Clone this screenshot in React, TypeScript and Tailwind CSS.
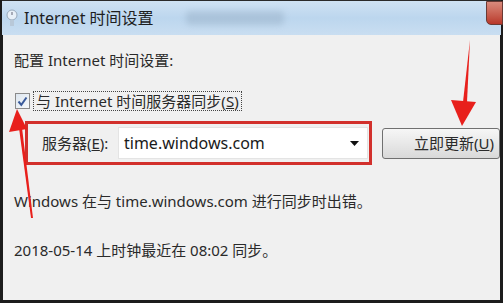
export default function App() {
  const font = { fontFamily: '"Noto Sans", "Noto Sans CJK SC", sans-serif' };

  return (
    <div className="relative w-[503px] h-[303px] overflow-hidden bg-[#1c1c1c]" style={font}>
      {/* title bar */}
      <div className="relative h-[35px] border-t border-[#2a2a2a] ml-[2px] mr-[2px] bg-gradient-to-b from-[#cfe2f3] via-[#bcd6ee] to-[#c9def1] flex items-center">
        <div className="w-[16px] h-[18px] ml-[2px] flex items-center justify-center">
          <svg width="14" height="18" viewBox="0 0 14 18">
            <circle cx="7" cy="6" r="5" fill="#e8f0f8" stroke="#9ab" strokeWidth="1" />
            <line x1="7" y1="6" x2="7" y2="3" stroke="#667" strokeWidth="1" />
            <rect x="5" y="11" width="4" height="6" fill="#b8c8d8" />
          </svg>
        </div>
        <span className="ml-[4px] text-[16px] text-[#1e1e1e] leading-none">Internet 时间设置</span>
        <div className="ml-[32px] h-[14px] w-[98px] rounded bg-[#8fa6bd] opacity-40 blur-[3px]" />
        <div className="absolute right-[-2px] top-0 w-[17px] h-[24px] rounded-bl-[5px] bg-gradient-to-b from-[#d98a7c] to-[#b8372a] border border-[#6a3a34]" />
      </div>

      {/* body */}
      <div className="h-[265px] ml-[3px] mr-[3px] bg-[#f0f0f0] text-[#2a2a2a] text-[15px] leading-none">
        <div className="pt-[18px] pl-[11px]">配置 Internet 时间设置:</div>

        <div className="mt-[23px] flex items-center pl-[12px]">
          <div className="w-[15px] h-[16px] border border-[#8a8a8a] bg-gradient-to-br from-[#dde6ef] to-[#f6f8fa] flex items-center justify-center">
            <svg width="11" height="11" viewBox="0 0 11 11">
              <path d="M1.5 5.5 L4.3 8.8 L9.5 1.5" fill="none" stroke="#3a5a9a" strokeWidth="2" />
            </svg>
          </div>
          <div className="ml-[3px] h-[20px] px-[2px] border border-dotted border-[#444] flex items-center">
            与 Internet 时间服务器同步(<span className="underline">S</span>)
          </div>
        </div>

        <div className="mt-[10px] flex items-center">
          <div className="ml-[22px] w-[347px] h-[44px] border-[3px] border-[#d2302c] flex items-center">
            <span className="ml-[14px] w-[76px]">
              服务器(<span className="underline">E</span>):
            </span>
            <div className="w-[250px] h-[32px] bg-white border border-[#e4e4e4] flex items-center justify-between pl-[5px] pr-[8px]">
              <span className="text-[16px] text-[#1a1a1a]">time.windows.com</span>
              <svg width="9" height="5" viewBox="0 0 9 5">
                <path d="M0 0 H9 L4.5 5 Z" fill="#111" />
              </svg>
            </div>
          </div>
          <div className="ml-[10px] w-[118px] h-[31px] rounded-[3px] border border-[#707070] bg-gradient-to-b from-[#f6f6f6] via-[#e8e8e8] to-[#d9d9d9] flex items-center justify-end pr-[5px]">
            立即更新(<span className="underline">U</span>)
          </div>
        </div>

        <div className="mt-[29px] pl-[11px]">Windows 在与 time.windows.com 进行同步时出错。</div>
        <div className="mt-[34px] pl-[11px]">2018-05-14 上时钟最近在 08:02 同步。</div>
      </div>

      {/* red annotation arrows */}
      <svg className="absolute left-0 top-0 pointer-events-none" width="503" height="303" viewBox="0 0 503 303">
        <path d="M33 218 L22 128 L19 128 L31 218 Z" fill="#e8201c" />
        <path d="M17 109 L9 132 L27 129 Z" fill="#e8201c" />
        <path d="M470 40 L463 102 L467 102 Z" fill="#e8201c" />
        <path d="M462 126 L451 100 L476 102 Z" fill="#e8201c" />
      </svg>
    </div>
  );
}
